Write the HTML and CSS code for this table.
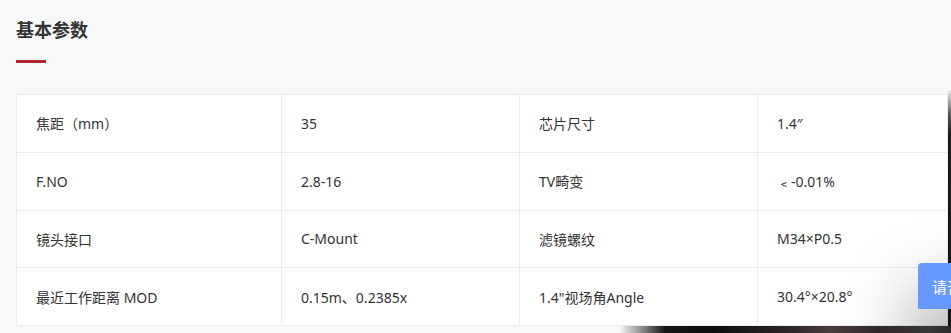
FILE: index.html
```html
<!DOCTYPE html>
<html lang="zh-CN">
<head>
<meta charset="utf-8">
<title>基本参数</title>
<link rel="stylesheet" href="styles.css">
</head>
<body>
<section class="spec">
  <h2 class="spec-title">基本参数</h2>
  <div class="spec-bar"></div>
  <div class="spec-table">
    <div class="cell">焦距（mm）</div>
    <div class="cell">35</div>
    <div class="cell">芯片尺寸</div>
    <div class="cell">1.4″</div>

    <div class="cell">F.NO</div>
    <div class="cell">2.8-16</div>
    <div class="cell">TV畸变</div>
    <div class="cell">﹤-0.01%</div>

    <div class="cell">镜头接口</div>
    <div class="cell">C-Mount</div>
    <div class="cell">滤镜螺纹</div>
    <div class="cell">M34×P0.5</div>

    <div class="cell">最近工作距离 MOD</div>
    <div class="cell">0.15m、0.2385x</div>
    <div class="cell">1.4"视场角Angle</div>
    <div class="cell">30.4°×20.8°</div>
  </div>
</section>
<div class="shade shade-corner"></div>
<div class="shade shade-right"></div>
<div class="shade shade-bottom"></div>
<div class="consult">请咨询</div>
</body>
</html>
```
FILE: styles.css
```css
html, body {
  margin: 0;
  padding: 0;
  background: #f7f8fa;
  overflow: hidden;
}
body {
  font-family: "Noto Sans", "Noto Sans CJK SC", sans-serif;
  color: #333;
  width: 951px;
  height: 333px;
}
.spec {
  padding: 16px 0 0 16px;
}
.spec-title {
  margin: 0;
  font-family: "Noto Sans CJK SC", sans-serif;
  font-size: 18px;
  line-height: 26px;
  font-weight: 700;
  color: #333;
}
.spec-bar {
  width: 30px;
  height: 3px;
  margin-top: 18px;
  background: #b0292a;
}
.spec-table {
  margin-top: 31px;
  width: 931px;
  display: grid;
  grid-template-columns: 265px 238px 238px 1fr;
  grid-auto-rows: 57.75px;
  border-top: 1px solid #ececec;
  border-left: 1px solid #ececec;
  background: #fff;
}
.cell {
  box-sizing: border-box;
  display: flex;
  align-items: center;
  padding-left: 19px;
  border-right: 1px solid #ececec;
  border-bottom: 1px solid #ececec;
  font-size: 14px;
  color: #333;
}
.shade {
  position: fixed;
}
.shade-corner {
  left: 955px;
  top: 335px;
  width: 10px;
  height: 10px;
  background: #111;
  box-shadow: 0 0 70px 45px rgba(0, 0, 0, 0.3);
}
.shade-right {
  left: 948px;
  top: 90px;
  width: 3px;
  height: 243px;
  background: linear-gradient(180deg, rgba(40, 40, 40, 0.05) 0px, #555 25px, #1a1a1a 45px, #151515 100%);
}
.shade-bottom {
  left: 620px;
  top: 326px;
  width: 331px;
  height: 7px;
  background: linear-gradient(90deg, rgba(230, 230, 230, 0.2) 0px, #8a8a8a 22px, #161616 45px, #0d0d0d 90px, #2c2626 170px, #4a3e3e 210px, #2e2828 260px, #3a3838 310px, #2a2a2a 331px);
}
.consult {
  position: fixed;
  left: 918px;
  top: 263px;
  width: 60px;
  height: 46px;
  box-sizing: border-box;
  padding-left: 14px;
  display: flex;
  align-items: center;
  background: #6699ff;
  color: #fff;
  font-family: "Noto Sans CJK SC", sans-serif;
  font-size: 15px;
  border-radius: 4px 0 0 0;
  white-space: nowrap;
  overflow: hidden;
}
```
